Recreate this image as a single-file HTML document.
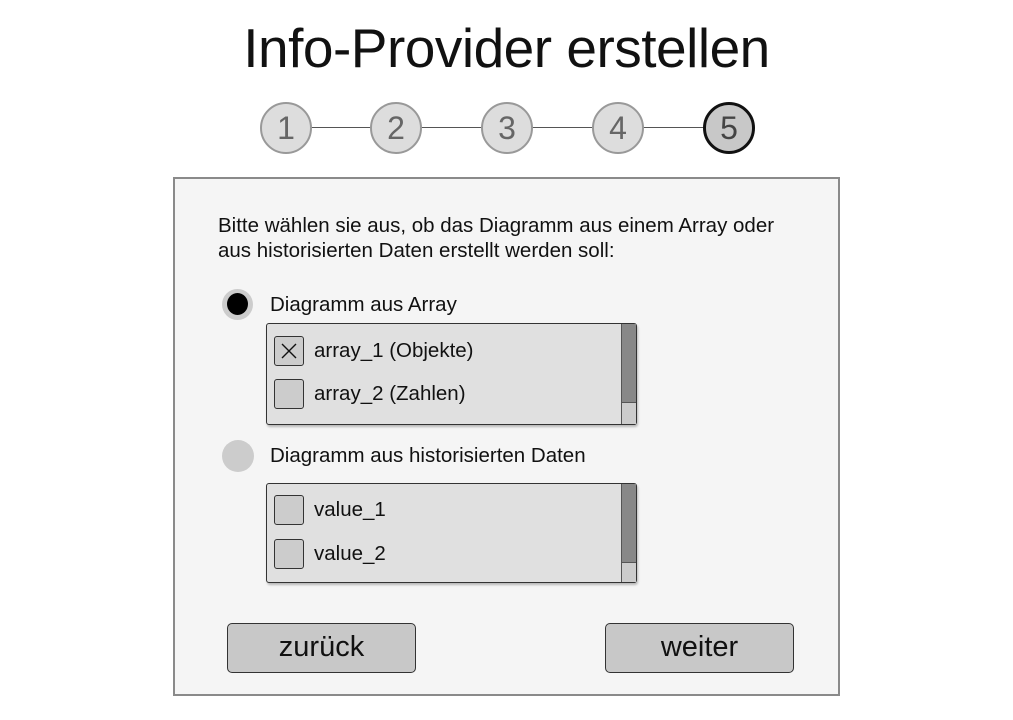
<!DOCTYPE html>
<html><head><meta charset="utf-8"><style>
body{margin:0;width:1013px;height:720px;background:#fff;font-family:"Liberation Sans",sans-serif;position:relative;overflow:hidden;color:#111}
.a{position:absolute}
.title{left:0;width:1013px;top:16px;text-align:center;font-size:55px;letter-spacing:-0.5px}
.c{width:52px;height:52px;border-radius:50%;background:#ddd;border:2px solid #999;box-sizing:border-box;text-align:center;line-height:48px;font-size:32px;color:#666;top:102px}
.line{height:1px;background:#555;top:127px}
.panel{left:173px;top:177px;width:667px;height:519px;background:#f5f5f5;border:2px solid #8a8a8a;box-sizing:border-box}
.t{font-size:20.5px;white-space:nowrap}
.list{left:266px;width:371px;background:#e0e0e0;border:1.5px solid #333;border-radius:3px;box-sizing:border-box;box-shadow:1px 2px 2px rgba(0,0,0,.25)}
.sb{right:0;top:0;width:14px;bottom:0;background:#ccc;border-left:1px solid #555}
.th{left:0;right:0;top:0;background:#888;border-bottom:1px solid #555}
.cb{width:30px;height:30px;background:#ccc;border:1.5px solid #333;border-radius:3px;box-sizing:border-box}
.btn{width:189px;height:50px;background:#c8c8c8;border:1.5px solid #333;border-radius:5px;box-sizing:border-box;text-align:center;line-height:46px;font-size:29px;top:623px}
</style></head><body>
<div class="a title">Info-Provider erstellen</div>
<div class="a line" style="left:310px;width:400px"></div>
<div class="a c" style="left:260px">1</div>
<div class="a c" style="left:370px">2</div>
<div class="a c" style="left:481px">3</div>
<div class="a c" style="left:592px">4</div>
<div class="a c" style="left:703px;border:3px solid #111;background:#c8c8c8;color:#444;line-height:46px">5</div>
<div class="a panel"></div>
<div class="a t" style="left:218px;top:213px;line-height:25px">Bitte wählen sie aus, ob das Diagramm aus einem Array oder<br>aus historisierten Daten erstellt werden soll:</div>
<div class="a" style="left:222px;top:289px;width:31px;height:31px;border-radius:50%;background:#ccc"></div>
<div class="a" style="left:227px;top:293px;width:21px;height:22px;border-radius:50%;background:#000"></div>
<div class="a t" style="left:270px;top:293px">Diagramm aus Array</div>
<div class="a list" style="top:323px;height:102px"><div class="a sb"><div class="a th" style="height:78px"></div></div></div>
<div class="a cb" style="left:274px;top:336px"></div>
<svg class="a" style="left:274px;top:336px" width="30" height="30"><path d="M8 8 L22 22 M22 8 L8 22" stroke="#111" stroke-width="1.4"/></svg>
<div class="a t" style="left:314px;top:339px">array_1 (Objekte)</div>
<div class="a cb" style="left:274px;top:379px"></div>
<div class="a t" style="left:314px;top:382px">array_2 (Zahlen)</div>
<div class="a" style="left:222px;top:440px;width:32px;height:32px;border-radius:50%;background:#ccc"></div>
<div class="a t" style="left:270px;top:444px">Diagramm aus historisierten Daten</div>
<div class="a list" style="top:483px;height:100px"><div class="a sb"><div class="a th" style="height:78px"></div></div></div>
<div class="a cb" style="left:274px;top:495px"></div>
<div class="a t" style="left:314px;top:498px">value_1</div>
<div class="a cb" style="left:274px;top:539px"></div>
<div class="a t" style="left:314px;top:542px">value_2</div>
<div class="a btn" style="left:227px">zurück</div>
<div class="a btn" style="left:605px">weiter</div>
</body></html>
